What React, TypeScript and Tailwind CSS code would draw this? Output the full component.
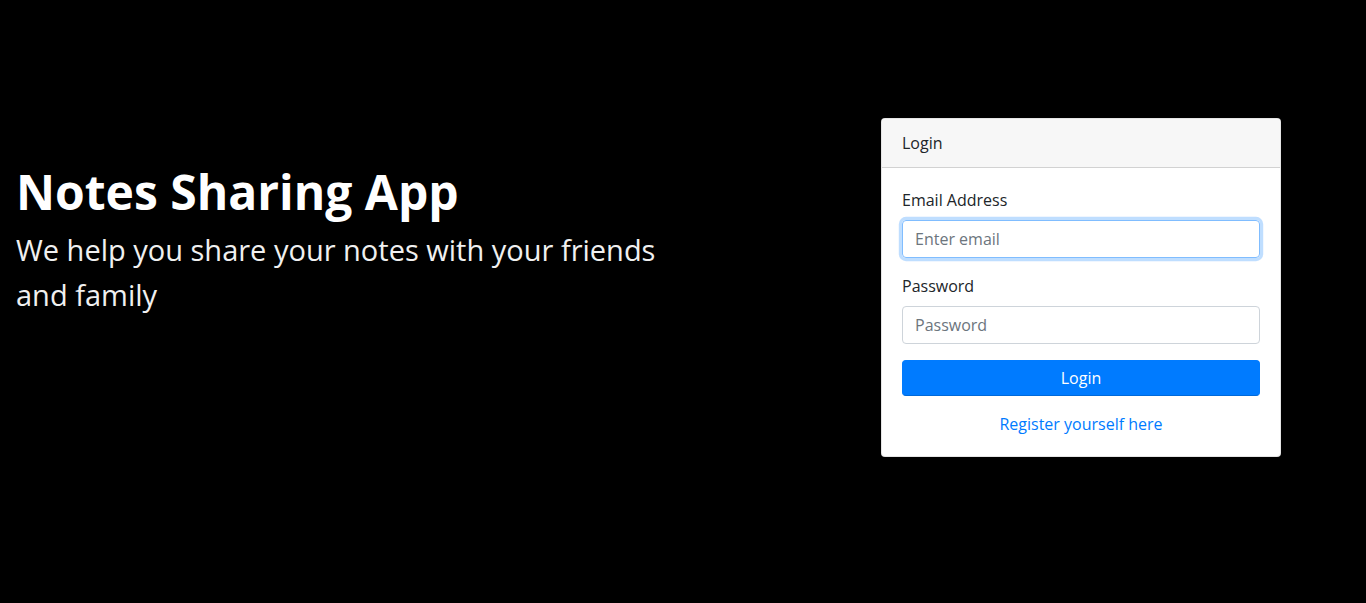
const App = () => {
  return (
    <div className="flex w-full min-h-[603px] bg-black font-['Open_Sans',sans-serif]">
      <div className="flex flex-col items-start w-[50%] pl-4 pt-[163px]">
        <h1 className="text-5xl font-bold text-white leading-[1.2]">
          Notes Sharing App
        </h1>
        <p className="text-[29px] leading-[45px] text-[#f0f0f0] mt-[6px] w-[670px]">
          We help you share your notes with your friends and family
        </p>
      </div>
      <div className="flex justify-end items-start w-[50%] pr-[85px] pt-[118px]">
        <div className="w-[400px] bg-white rounded border border-black/10 flex flex-col">
          <div className="bg-[#f7f7f7] border-b border-black/15 px-5 py-3 text-base leading-6 text-[#212529] rounded-t">
            Login
          </div>
          <div className="flex flex-col p-5 text-base leading-6 text-[#212529]">
            <label className="mb-2">Email Address</label>
            <input
              type="email"
              placeholder="Enter email"
              className="h-[38px] w-full px-3 rounded border border-[#80bdff] shadow-[0_0_0_3.2px_rgba(0,123,255,0.25)] outline-none placeholder:text-[#6c757d]"
            />
            <label className="mt-4 mb-2">Password</label>
            <input
              type="password"
              placeholder="Password"
              className="h-[38px] w-full px-3 rounded border border-[#ced4da] outline-none placeholder:text-[#6c757d]"
            />
            <button className="mt-4 h-[36px] w-full rounded bg-[#007bff] border border-[#007bff] border-b-[#0069d9] text-white">
              Login
            </button>
            <a href="#" className="mt-4 text-center text-[#007bff]">
              Register yourself here
            </a>
          </div>
        </div>
      </div>
    </div>
  );
};

export default App;
